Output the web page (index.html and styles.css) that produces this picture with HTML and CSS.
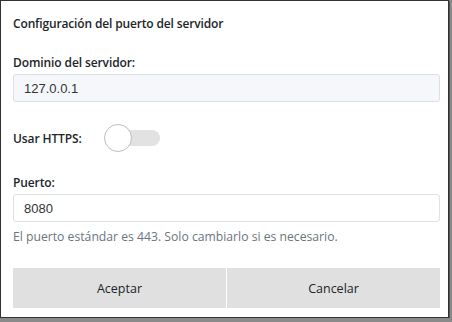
FILE: index.html
```html
<!DOCTYPE html>
<html lang="es">
<head>
    <meta charset="UTF-8">
    <meta name="viewport" content="width=device-width, initial-scale=1.0">
    <title>Configuración del puerto del servidor</title>
    <link rel="stylesheet" href="styles.css">
</head>
<body>
    <div class="dialog">
        <div class="title">Configuración del puerto del servidor</div>

        <div class="group">
            <label class="label" for="domain">Dominio del servidor:</label>
            <input class="input readonly" id="domain" type="text" value="127.0.0.1" readonly>
        </div>

        <div class="switch-row">
            <span class="label switch-label">Usar HTTPS:</span>
            <span class="switch">
                <span class="track"></span>
                <span class="knob"></span>
            </span>
        </div>

        <div class="group">
            <label class="label" for="port">Puerto:</label>
            <input class="input" id="port" type="text" value="8080">
        </div>
        <div class="hint">El puerto estándar es 443. Solo cambiarlo si es necesario.</div>

        <div class="buttons">
            <button class="btn">Aceptar</button>
            <button class="btn">Cancelar</button>
        </div>
    </div>
</body>
</html>
```

FILE: styles.css
```css
body {
    margin: 0;
    background-color: #8a8a8a;
    font-family: 'Open Sans', 'Noto Sans', sans-serif;
    font-size: 12px;
    color: #212529;
}

.dialog {
    width: 447px;
    height: 316px;
    box-sizing: content-box;
    border: 1px solid #333;
    box-shadow: 1px 1px 0 #555;
    background-color: #fff;
    display: flex;
    flex-direction: column;
}

.dialog > * {
    margin-left: 12px;
    margin-right: 8px;
}

.title {
    margin-top: 14px;
    line-height: 17px;
    font-weight: 600;
    letter-spacing: -0.15px;
}

.group {
    display: flex;
    flex-direction: column;
    margin-top: 22px;
}

.label {
    line-height: 17px;
    font-weight: 600;
    letter-spacing: -0.1px;
    margin-bottom: 3px;
}

.input {
    height: 28px;
    box-sizing: border-box;
    border: 1px solid #dde2e8;
    border-radius: 3px;
    padding: 0 10px;
    font-family: 'Liberation Sans', Arial, sans-serif;
    font-size: 13px;
    color: #333;
    background-color: #fff;
    outline: none;
}

.input.readonly {
    background-color: #f5f7fa;
    border-color: #d9e0e8;
}

.switch-row {
    display: flex;
    align-items: center;
    margin-top: 22px;
    height: 28px;
}

.switch-label {
    width: 91px;
    margin-bottom: 0;
}

.switch {
    position: relative;
    width: 56px;
    height: 28px;
    display: flex;
    align-items: center;
}

.track {
    margin-left: 6px;
    width: 50px;
    height: 16px;
    border-radius: 8px;
    background-color: #e2e2e2;
}

.knob {
    position: absolute;
    left: 0;
    top: 0;
    width: 28px;
    height: 28px;
    box-sizing: border-box;
    border-radius: 50%;
    border: 1px solid #bdbdbd;
    background-color: #fff;
}

.hint {
    margin-top: 6px;
    line-height: 17px;
    font-size: 12.2px;
    color: #6c757d;
}

.buttons {
    display: grid;
    grid-template-columns: 1fr 1fr;
    gap: 1px;
    margin-top: 23px;
}

.btn {
    height: 40px;
    border: none;
    background-color: #e0e0e0;
    font-family: 'Open Sans', 'Noto Sans', sans-serif;
    font-size: 12.5px;
    color: #212529;
    cursor: pointer;
}

.btn:hover {
    background-color: #d6d6d6;
}
```
